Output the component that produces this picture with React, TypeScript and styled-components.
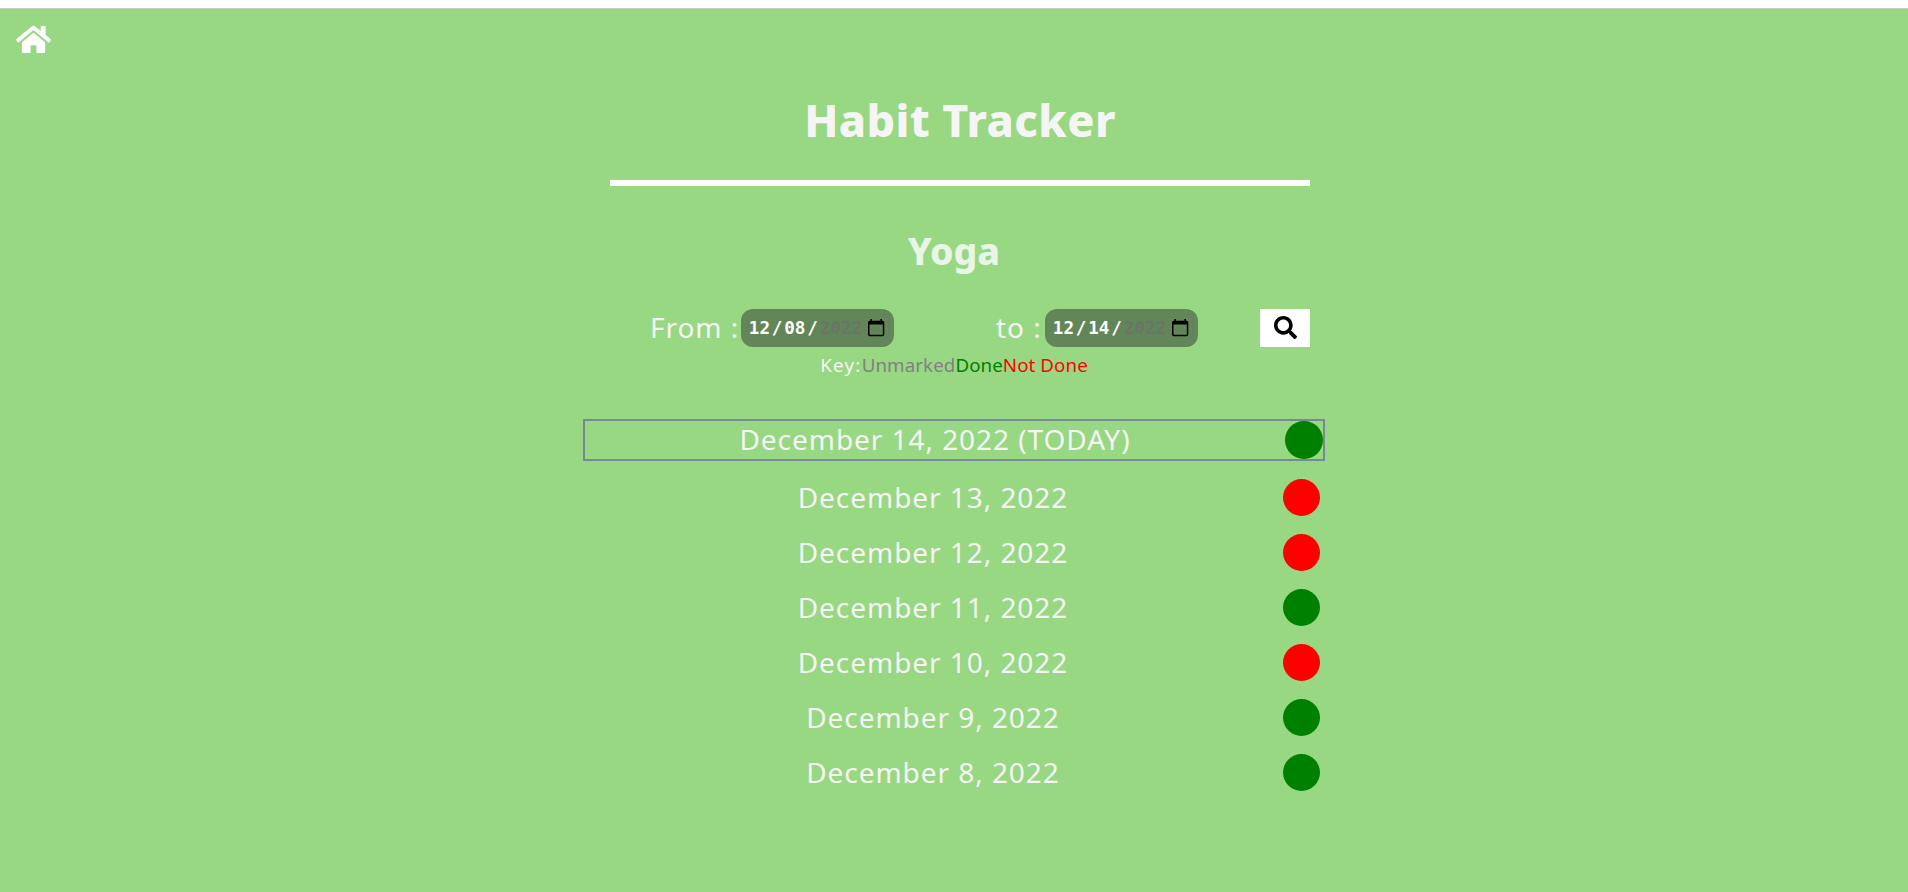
import React from 'react';
import styled, { createGlobalStyle } from 'styled-components';
import { FaHome, FaSearch } from 'react-icons/fa';

const GlobalStyle = createGlobalStyle`
  * { box-sizing: border-box; }
  body {
    margin: 0;
    background: #fff;
    font-family: 'Noto Sans', 'Open Sans', sans-serif;
    overflow: hidden;
  }
`;

const Page = styled.div`
  margin-top: 8px;
  height: 884px;
  border-top: 1px solid #c8cfc6;
  background: #98d883;
  color: whitesmoke;
  display: flex;
  flex-direction: column;
`;

const Nav = styled.nav`
  height: 61px;
  padding: 13px 0 0 16px;
  svg { display: block; width: 35px; height: 35px; color: #fff; }
`;

const Title = styled.h1`
  width: 700px;
  height: 116px;
  margin: 0 0 0 610px;
  padding-top: 20px;
  border-bottom: 6px solid #fff;
  font-size: 44.8px;
  font-weight: 800;
  line-height: 60px;
  letter-spacing: 0.4px;
  text-align: center;
`;

const HabitName = styled.h2`
  margin: 40px 0 0;
  height: 83px;
  font-size: 37.4px;
  font-weight: 800;
  line-height: 50px;
  text-align: center;
  color: #e9f6e5;
`;

const FilterForm = styled.div`
  width: 660px;
  height: 38px;
  margin-left: 650px;
  display: flex;
`;

const Label = styled.label`
  width: 91px;
  flex: none;
  font-size: 28px;
  line-height: 36px;
  letter-spacing: 0.95px;
  white-space: nowrap;
`;

const ToLabel = styled(Label)`
  width: 49px;
  margin-left: 102px;
`;

const DateField = styled.div`
  width: 153px;
  flex: none;
  display: flex;
  align-items: center;
  padding: 0 9px 1px 6px;
  border-radius: 12px;
  background: #638659;
  color: #fff;
  font-family: 'DejaVu Sans Mono', 'Liberation Mono', monospace;
  font-size: 17.6px;
  font-weight: 700;
  svg { margin-left: auto; display: block; }
`;

const Segment = styled.span<{ $muted?: boolean }>`
  padding: 0 1.8px;
  color: ${(p) => (p.$muted ? '#6c736b' : 'inherit')};
`;

const SearchButton = styled.button`
  width: 50px;
  height: 38px;
  margin: 0 0 0 auto;
  padding: 0 0 1px;
  border: 0;
  background: #fff;
  color: #000;
  display: flex;
  align-items: center;
  justify-content: center;
  font-size: 23px;
`;

const Legend = styled.div`
  height: 36px;
  display: flex;
  justify-content: center;
  font-size: 18.7px;
  line-height: 36px;
  letter-spacing: 0.1px;
`;

const LegendItem = styled.span<{ $color?: string }>`
  color: ${(p) => p.$color ?? 'inherit'};
`;

const LegendTitle = styled(LegendItem)`
  letter-spacing: 1.3px;
`;

const DayList = styled.div`
  width: 742px;
  margin: 36px 0 0 583px;
`;

const Day = styled.div<{ $today?: boolean }>`
  display: flex;
  align-items: center;
  height: ${(p) => (p.$today ? 42 : 37)}px;
  margin-bottom: 18px;
  border: ${(p) => (p.$today ? '2px solid #778899' : '0')};
  padding-right: ${(p) => (p.$today ? 0 : 5)}px;
`;

const DayText = styled.div<{ $today?: boolean }>`
  flex: 1;
  padding-bottom: ${(p) => (p.$today ? 2 : 1)}px;
  font-size: 28px;
  line-height: 36px;
  letter-spacing: 0.95px;
  text-align: center;
`;

const Dot = styled.div<{ $done: boolean; $size: number }>`
  flex: none;
  width: ${(p) => p.$size}px;
  height: ${(p) => p.$size}px;
  border-radius: 50%;
  background: ${(p) => (p.$done ? 'green' : 'red')};
`;

const CalendarIcon = () => (
  <svg width="17" height="18" viewBox="0 0 17 18">
    <path
      fill="#000"
      fillRule="evenodd"
      d="M2.4 0h1.6v1.7h8.4V0H14v1.7h.6q1.7 0 1.7 1.7v12.2q0 1.7-1.7 1.7H1.7Q0 17.3 0 15.6V3.4Q0 1.7 1.7 1.7h.7zM1.5 5.6v10.2h13.3V5.6z"
    />
  </svg>
);

const DateInput = ({ day }: { day: string }) => (
  <DateField>
    <Segment>12</Segment>/<Segment>{day}</Segment>/<Segment $muted>2022</Segment>
    <CalendarIcon />
  </DateField>
);

const days = [
  { label: 'December 14, 2022 (TODAY)', done: true, today: true },
  { label: 'December 13, 2022', done: false },
  { label: 'December 12, 2022', done: false },
  { label: 'December 11, 2022', done: true },
  { label: 'December 10, 2022', done: false },
  { label: 'December 9, 2022', done: true },
  { label: 'December 8, 2022', done: true },
];

export default function App() {
  return (
    <>
      <GlobalStyle />
      <Page>
        <Nav>
          <FaHome />
        </Nav>
        <Title>Habit Tracker</Title>
        <HabitName>Yoga</HabitName>
        <FilterForm>
          <Label>From :</Label>
          <DateInput day="08" />
          <ToLabel>to :</ToLabel>
          <DateInput day="14" />
          <SearchButton aria-label="Search">
            <FaSearch />
          </SearchButton>
        </FilterForm>
        <Legend>
          <LegendTitle>Key:</LegendTitle>
          <LegendItem $color="gray">Unmarked</LegendItem>
          <LegendItem $color="green">Done</LegendItem>
          <LegendItem $color="red">Not Done</LegendItem>
        </Legend>
        <DayList>
          {days.map((d) => (
            <Day key={d.label} $today={d.today}>
              <DayText $today={d.today}>{d.label}</DayText>
              <Dot $done={d.done} $size={d.today ? 38 : 37} />
            </Day>
          ))}
        </DayList>
      </Page>
    </>
  );
}
